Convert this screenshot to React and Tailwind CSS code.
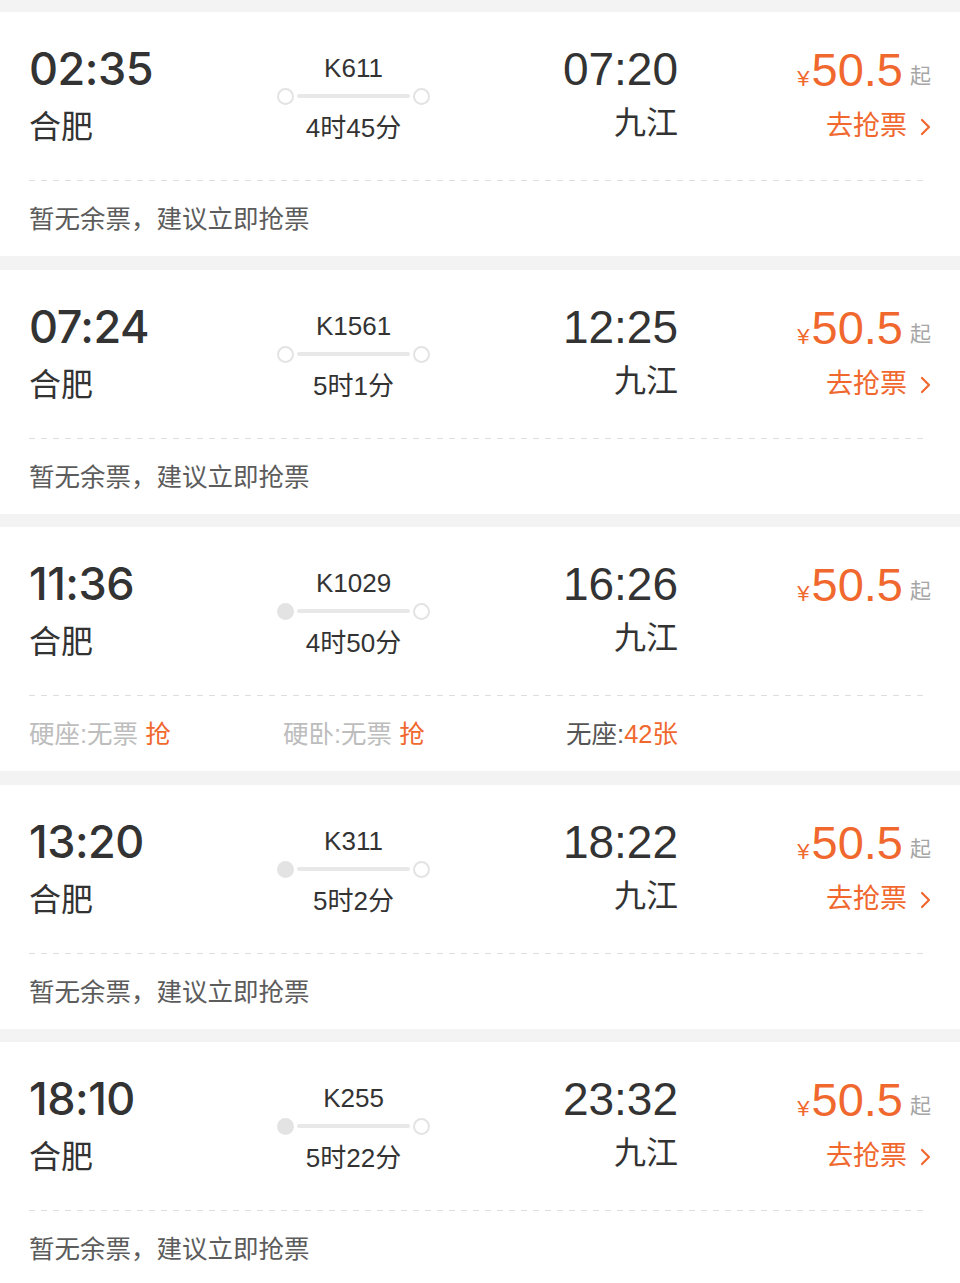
const trains = [
  { dep: "02:35", no: "K611", dur: "4时45分", arr: "07:20", filled: false, grab: true },
  { dep: "07:24", no: "K1561", dur: "5时1分", arr: "12:25", filled: false, grab: true },
  {
    dep: "11:36",
    no: "K1029",
    dur: "4时50分",
    arr: "16:26",
    filled: true,
    grab: false,
    seats: true,
  },
  { dep: "13:20", no: "K311", dur: "5时2分", arr: "18:22", filled: true, grab: true },
  { dep: "18:10", no: "K255", dur: "5时22分", arr: "23:32", filled: true, grab: true },
];

const font = "font-['Liberation_Sans','Noto_Sans_CJK_SC',sans-serif]";

function Chevron() {
  return (
    <svg width="11" height="18" viewBox="0 0 11 18" className="ml-[13px]">
      <path d="M2 2 L9 9 L2 16" fill="none" stroke="#f0682e" strokeWidth="2.2" strokeLinecap="round" strokeLinejoin="round" />
    </svg>
  );
}

function Card({ t, gap }) {
  return (
    <div className={`${gap} h-[244px] bg-white px-[29px] pt-[34px]`}>
      <div className="flex h-[100px]">
        <div className="w-[248px]">
          <div className="font-['Inter',sans-serif] text-[45px] font-medium leading-none tracking-[-0.5px] text-[#333]">
            {t.dep}
          </div>
          <div className="mt-[20px] text-[32px] leading-none text-[#333]">合肥</div>
        </div>

        <div className="flex w-[153px] flex-col items-center">
          <div className="mt-[9px] text-[26px] leading-none text-[#333]">{t.no}</div>
          <div className="mt-[6px] flex h-[18px] w-full items-center">
            <span
              className={`h-[17px] w-[17px] shrink-0 rounded-full border-2 border-[#e3e3e3] ${
                t.filled ? "bg-[#e3e3e3]" : "bg-white"
              }`}
            />
            <span className="mx-[3px] h-[4px] flex-1 rounded-full bg-[#e8e8e8]" />
            <span className="h-[17px] w-[17px] shrink-0 rounded-full border-2 border-[#e3e3e3] bg-white" />
          </div>
          <div className="mt-[10px] text-[26px] leading-none text-[#333]">{t.dur}</div>
        </div>

        <div className="flex w-[248px] flex-col items-end">
          <div className="text-[46px] leading-none text-[#333]">{t.arr}</div>
          <div className="mt-[15px] text-[32px] leading-none text-[#333]">九江</div>
        </div>

        <div className="flex flex-1 flex-col items-end">
          <div className="flex items-baseline leading-none">
            <span className="mr-[2px] text-[22px] text-[#f0682e]">¥</span>
            <span className="text-[47px] text-[#f0682e]">50.5</span>
            <span className="relative -top-[3px] ml-[7px] text-[21px] text-[#a6a6a6]">起</span>
          </div>
          <div className="mt-[20px] flex items-center text-[27px] leading-none text-[#f0682e]">
            {t.grab && (
              <>
                去抢票
                <Chevron />
              </>
            )}
          </div>
        </div>
      </div>

      <div className="mt-[34px] h-px w-[898px] bg-[linear-gradient(to_right,#dedede_50%,transparent_50%)] bg-[length:12px_1px]" />

      {t.seats ? (
        <div className="mt-[26px] flex text-[25.5px] leading-none">
          <div className="w-[248px] text-[#bdbdbd]">
            硬座:无票 <span className="text-[#f0682e]">抢</span>
          </div>
          <div className="w-[153px] whitespace-nowrap pl-[6px] text-[#bdbdbd]">
            硬卧:无票 <span className="text-[#f0682e]">抢</span>
          </div>
          <div className="w-[248px] text-right text-[#555]">
            无座:<span className="text-[#f0682e]">42张</span>
          </div>
        </div>
      ) : (
        <div className="mt-[26px] text-[25.5px] leading-none text-[#5c5c5c]">暂无余票，建议立即抢票</div>
      )}
    </div>
  );
}

export default function App() {
  const gaps = ["mt-[12px]", "mt-[14px]", "mt-[13px]", "mt-[14px]", "mt-[13px]"];
  return (
    <div className={`${font} min-h-[1283px] w-[960px] overflow-hidden bg-[#f3f3f3]`}>
      {trains.map((t, i) => (
        <Card key={t.no} t={t} gap={gaps[i]} />
      ))}
    </div>
  );
}
